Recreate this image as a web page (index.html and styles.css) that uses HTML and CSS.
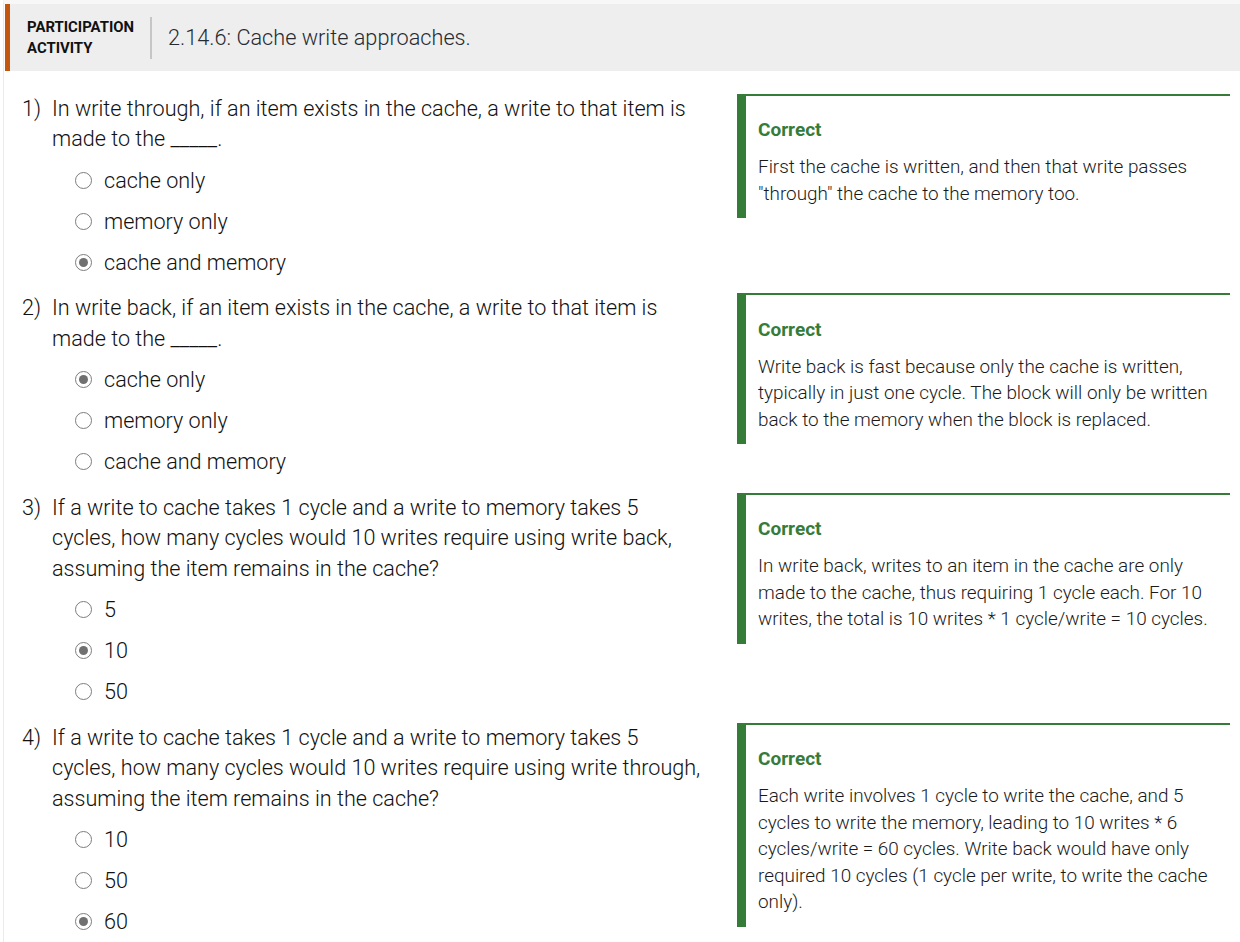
FILE: index.html
```html
<!DOCTYPE html>
<html lang="en">
<head>
<meta charset="utf-8">
<title>2.14.6: Cache write approaches.</title>
<link rel="stylesheet" href="styles.css">
</head>
<body>
<div class="activity">
  <header class="act-header">
    <div class="act-label">PARTICIPATION<br>ACTIVITY</div>
    <div class="act-sep"></div>
    <h1 class="act-title">2.14.6: Cache write approaches.</h1>
  </header>

  <div class="questions">
    <div class="qa">
      <div class="question">
        <div class="q-prompt">
          <span class="q-num">1)</span>
          <span class="q-text">In write through, if an item exists in the cache, a write to that item is made to the _____.</span>
        </div>
        <ul class="options">
          <li class="option"><span class="radio"></span><span>cache only</span></li>
          <li class="option"><span class="radio"></span><span>memory only</span></li>
          <li class="option"><span class="radio checked"></span><span>cache and memory</span></li>
        </ul>
      </div>
      <div class="feedback">
        <div class="fb-title">Correct</div>
        <p class="fb-text">First the cache is written, and then that write passes "through" the cache to the memory too.</p>
      </div>
    </div>

    <div class="qa">
      <div class="question">
        <div class="q-prompt">
          <span class="q-num">2)</span>
          <span class="q-text">In write back, if an item exists in the cache, a write to that item is made to the _____.</span>
        </div>
        <ul class="options">
          <li class="option"><span class="radio checked"></span><span>cache only</span></li>
          <li class="option"><span class="radio"></span><span>memory only</span></li>
          <li class="option"><span class="radio"></span><span>cache and memory</span></li>
        </ul>
      </div>
      <div class="feedback">
        <div class="fb-title">Correct</div>
        <p class="fb-text">Write back is fast because only the cache is written, typically in just one cycle. The block will only be written back to the memory when the block is replaced.</p>
      </div>
    </div>

    <div class="qa">
      <div class="question">
        <div class="q-prompt">
          <span class="q-num">3)</span>
          <span class="q-text">If a write to cache takes 1 cycle and a write to memory takes 5 cycles, how many cycles would 10 writes require using write back, assuming the item remains in the cache?</span>
        </div>
        <ul class="options">
          <li class="option"><span class="radio"></span><span>5</span></li>
          <li class="option"><span class="radio checked"></span><span>10</span></li>
          <li class="option"><span class="radio"></span><span>50</span></li>
        </ul>
      </div>
      <div class="feedback">
        <div class="fb-title">Correct</div>
        <p class="fb-text">In write back, writes to an item in the cache are only made to the cache, thus requiring 1 cycle each. For 10 writes, the total is 10 writes * 1 cycle/write = 10 cycles.</p>
      </div>
    </div>

    <div class="qa">
      <div class="question">
        <div class="q-prompt">
          <span class="q-num">4)</span>
          <span class="q-text">If a write to cache takes 1 cycle and a write to memory takes 5 cycles, how many cycles would 10 writes require using write through, assuming the item remains in the cache?</span>
        </div>
        <ul class="options">
          <li class="option"><span class="radio"></span><span>10</span></li>
          <li class="option"><span class="radio"></span><span>50</span></li>
          <li class="option"><span class="radio checked"></span><span>60</span></li>
        </ul>
      </div>
      <div class="feedback">
        <div class="fb-title">Correct</div>
        <p class="fb-text">Each write involves 1 cycle to write the cache, and 5 cycles to write the memory, leading to 10 writes * 6 cycles/write = 60 cycles. Write back would have only required 10 cycles (1 cycle per write, to write the cache only).</p>
      </div>
    </div>
  </div>
</div>
</body>
</html>
```
FILE: styles.css
```css
html, body {
  margin: 0;
  padding: 0;
  background: #ffffff;
}

body {
  font-family: Roboto, "Liberation Sans", Arial, sans-serif;
  color: #1a1a1a;
}

.activity {
  margin-left: 3px;
  border-left: 1px solid #ebebeb;
  border-top: 4px solid #f7f7f7;
  min-height: 938px;
  box-sizing: border-box;
}

.act-header {
  margin-left: 1px;
  height: 67px;
  background: #eeeeee;
  border-left: 5px solid #c4570f;
  display: flex;
  align-items: center;
  padding-left: 17px;
  box-sizing: border-box;
}

.act-label {
  font-weight: 700;
  font-size: 14.9px;
  line-height: 21px;
  color: #111;
}

.act-sep {
  width: 2px;
  height: 42px;
  background: #c6c6c6;
  margin-left: 16px;
  margin-right: 16px;
}

.act-title {
  margin: 0;
  font-size: 21.7px;
  font-weight: 300;
  color: #262a31;
}

.questions {
  padding: 22.5px 10px 0 18px;
}

.qa {
  display: grid;
  grid-template-columns: 1fr 493px;
  column-gap: 32px;
  align-items: start;
  margin-bottom: 10.5px;
}

.q-prompt {
  display: flex;
  font-size: 21.6px;
  font-weight: 300;
  line-height: 30.5px;
  color: #111;
}

.q-num {
  flex: 0 0 30px;
}

.q-text {
  flex: 1;
}

.options {
  list-style: none;
  margin: 5px 0 0 0;
  padding: 0 0 0 53px;
}

.option {
  display: flex;
  align-items: center;
  height: 41px;
  font-size: 21.6px;
  font-weight: 300;
  color: #111;
}

.radio {
  width: 17px;
  height: 17px;
  border: 1.5px solid #7d7d7d;
  border-radius: 50%;
  margin-right: 12px;
  box-sizing: border-box;
  position: relative;
  flex: 0 0 auto;
}

.radio.checked::after {
  content: "";
  position: absolute;
  left: 50%;
  top: 50%;
  width: 9px;
  height: 9px;
  margin: -4.5px 0 0 -4.5px;
  border-radius: 50%;
  background: #707070;
}

.feedback {
  border-top: 2px solid #367c39;
  border-left: 9px solid #367c39;
  padding: 21.5px 12px 11px 12px;
}

.fb-title {
  font-size: 19px;
  font-weight: 700;
  color: #367c39;
  line-height: 26px;
}

.fb-text {
  margin: 11px 0 0 0;
  font-size: 18.9px;
  font-weight: 300;
  line-height: 26.5px;
  color: #1a1a1a;
}
```
